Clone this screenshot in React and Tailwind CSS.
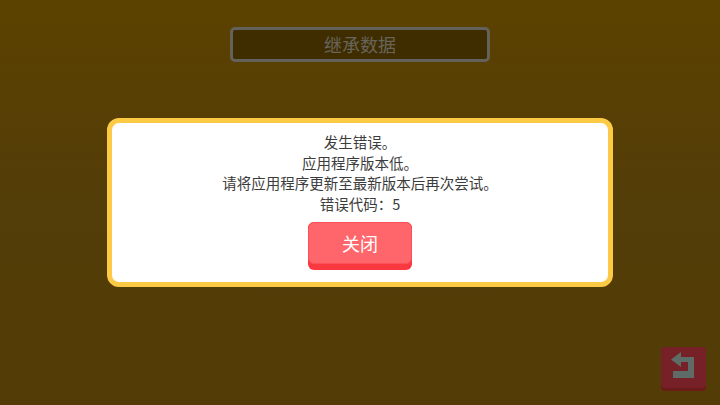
export default function App() {
  return (
    <div
      className="w-[720px] h-[405px] overflow-hidden bg-linear-to-b from-[#5c4200] via-[#533d08] to-[#533c06] flex flex-col items-center pt-[27px]"
      style={{ fontFamily: '"Noto Sans CJK SC", "Liberation Sans", sans-serif' }}
    >
      <div className="w-[260px] h-[35px] rounded-[5px] border-[3px] border-[#63615a] bg-[#3f2d00] flex items-center justify-center pb-[2px] text-[18px] leading-none text-[#67645a]">
        继承数据
      </div>

      <div className="mt-[56px] w-[506px] h-[169px] rounded-[12px] border-[5px] border-[#fdca45] bg-white flex flex-col items-center pt-[9px]">
        <div className="text-[14.5px] leading-[20.6px] text-[#3c3c3c] text-center">
          <p>发生错误。</p>
          <p>应用程序版本低。</p>
          <p>请将应用程序更新至最新版本后再次尝试。</p>
          <p>错误代码：5</p>
        </div>
        <div className="mt-[8px] w-[104px] h-[48px] rounded-[6px] bg-[#f9383f] pb-[6px]">
          <div className="h-full rounded-[6px] border border-[#fb5056] bg-[#ff666b] flex items-center justify-center pb-[1px] text-[18px] leading-none text-white">
            关闭
          </div>
        </div>
      </div>

      <div className="w-full flex justify-end pr-[14px] mt-[60px]">
        <div className="w-[45px] h-[44px] rounded-[4px] bg-[#6b1b18] pb-[3px]">
          <div className="h-full rounded-[4px] bg-[#762128]">
            <svg width="45" height="41" viewBox="0 0 45 41" fill="#5e6c68">
              <path d="M10 12.5 L20 5 V10 H33 V31 H12 V24 H27 V15 H20 V20 Z" />
            </svg>
          </div>
        </div>
      </div>
    </div>
  );
}
